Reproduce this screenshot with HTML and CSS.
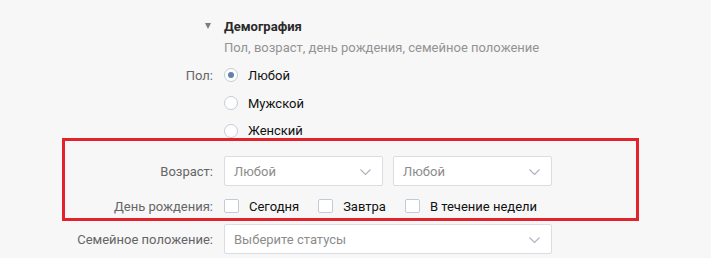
FILE: index.html
```html
<!DOCTYPE html>
<html lang="ru">
<head>
<meta charset="utf-8">
<link rel="stylesheet" href="styles.css">
</head>
<body>
<div class="page">
  <div class="row head">
    <div class="label"><span class="tri"></span></div>
    <div class="title">Демография</div>
  </div>
  <div class="row sub">
    <div class="label"></div>
    <div class="subtitle">Пол, возраст, день рождения, семейное положение</div>
  </div>
  <div class="row radio-row r1">
    <div class="label">Пол:</div>
    <div class="opt"><span class="radio on"></span>Любой</div>
  </div>
  <div class="row radio-row r1">
    <div class="label"></div>
    <div class="opt"><span class="radio"></span>Мужской</div>
  </div>
  <div class="row radio-row r3">
    <div class="label"></div>
    <div class="opt"><span class="radio"></span>Женский</div>
  </div>
  <div class="row age">
    <div class="label">Возраст:</div>
    <div class="selects">
      <div class="select half"><span>Любой</span><svg class="chev" width="11" height="6" viewBox="0 0 11 6"><path d="M0.5 0.5 L5.5 5.5 L10.5 0.5" fill="none" stroke="#aab3bd" stroke-width="1.1"/></svg></div>
      <div class="select half"><span>Любой</span><svg class="chev" width="11" height="6" viewBox="0 0 11 6"><path d="M0.5 0.5 L5.5 5.5 L10.5 0.5" fill="none" stroke="#aab3bd" stroke-width="1.1"/></svg></div>
    </div>
  </div>
  <div class="row bday">
    <div class="label">День рождения:</div>
    <div class="checks">
      <div class="chk"><span class="box"></span>Сегодня</div>
      <div class="chk"><span class="box"></span>Завтра</div>
      <div class="chk"><span class="box"></span>В течение недели</div>
    </div>
  </div>
  <div class="row family">
    <div class="label">Семейное положение:</div>
    <div class="select full"><span>Выберите статусы</span><svg class="chev" width="11" height="6" viewBox="0 0 11 6"><path d="M0.5 0.5 L5.5 5.5 L10.5 0.5" fill="none" stroke="#aab3bd" stroke-width="1.1"/></svg></div>
  </div>
  <div class="highlight"></div>
</div>
</body>
</html>
```
FILE: styles.css
```css
* { box-sizing: border-box; }
html, body { margin: 0; padding: 0; }
body {
  background: #f7f7f7;
  font-family: Roboto, "Noto Sans", Arial, sans-serif;
  font-size: 13px;
  color: #222;
  width: 711px;
  height: 258px;
  overflow: hidden;
}
.page {
  position: relative;
  padding-top: 17px;
}
.row {
  display: flex;
  align-items: center;
  gap: 11px;
}
.label {
  width: 213px;
  flex: 0 0 213px;
  text-align: right;
  color: #656565;
  white-space: nowrap;
}
.head { height: 18px; }
.head .label { display: flex; justify-content: flex-end; padding-right: 2px; }
.tri {
  display: block;
  width: 0;
  height: 0;
  border-left: 3.5px solid transparent;
  border-right: 3.5px solid transparent;
  border-top: 6px solid #7d7d7d;
}
.title { font-weight: 700; color: #2a2a2a; }
.sub { height: 18px; margin-top: 3px; }
.subtitle { color: #939393; }
.radio-row { height: 28px; }
.sub + .radio-row { margin-top: 5px; }
.r3 { height: 27px; }
.opt { display: flex; align-items: center; color: #111; }
.radio {
  width: 14px;
  height: 14px;
  border: 1px solid #c3ccd6;
  border-radius: 50%;
  background: #fff;
  margin-right: 10px;
  display: inline-flex;
  align-items: center;
  justify-content: center;
}
.radio.on::after {
  content: "";
  width: 6px;
  height: 6px;
  border-radius: 50%;
  background: #5f83ad;
}
.age { margin-top: 12px; }
.selects { display: flex; gap: 10px; }
.select {
  height: 30px;
  background: #fff;
  border: 1px solid #dadee3;
  border-radius: 2px;
  display: flex;
  align-items: center;
  justify-content: space-between;
  padding: 0 11px 0 9px;
  color: #8c8c8c;
}
.half { width: 159px; }
.full { width: 328px; }
.chev { display: block; margin-top: 1px; }
.bday { height: 20px; margin-top: 10px; }
.checks { display: flex; align-items: center; }
.chk { display: flex; align-items: center; color: #111; margin-right: 19px; }
.box {
  width: 15px;
  height: 14px;
  border: 1px solid #c3ccd6;
  border-radius: 2px;
  background: #fff;
  margin-right: 10px;
}
.family { margin-top: 8px; }
.highlight {
  position: absolute;
  left: 62px;
  top: 138px;
  width: 577px;
  height: 83px;
  border: 3px solid #e2232b;
  pointer-events: none;
}
```
